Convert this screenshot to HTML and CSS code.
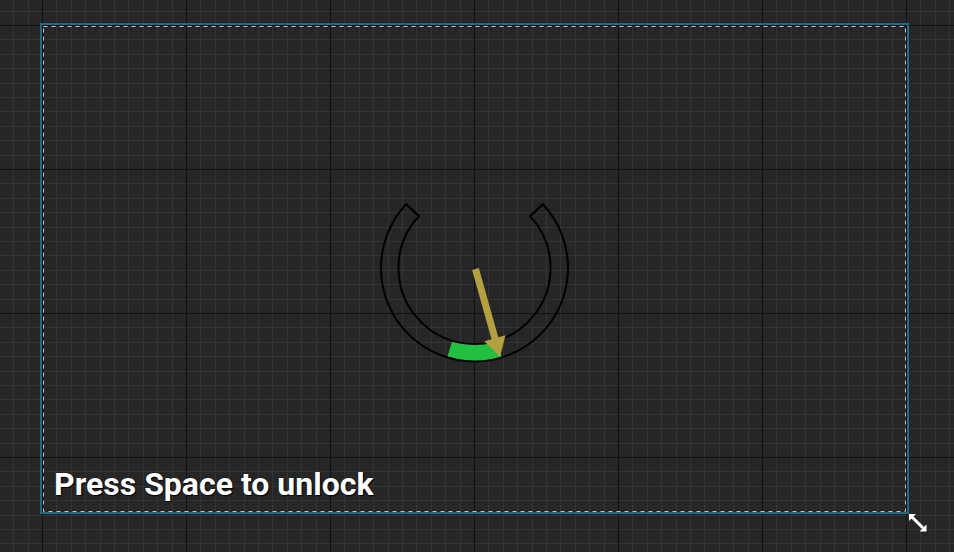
FILE: index.html
```html
<!DOCTYPE html>
<html lang="en">
<head>
<meta charset="utf-8">
<title>Widget Designer</title>
<link rel="stylesheet" href="styles.css">
</head>
<body>
<main class="viewport">
  <svg class="grid" width="954" height="552" aria-hidden="true">
    <defs>
      <pattern id="cell" x="42" y="25" width="144" height="144" patternUnits="userSpaceOnUse">
        <g class="minor">
          <rect x="14" y="0" width="1" height="144"/><rect x="29" y="0" width="1" height="144"/>
          <rect x="43" y="0" width="1" height="144"/><rect x="58" y="0" width="1" height="144"/>
          <rect x="72" y="0" width="1" height="144"/><rect x="86" y="0" width="1" height="144"/>
          <rect x="101" y="0" width="1" height="144"/><rect x="115" y="0" width="1" height="144"/>
          <rect x="130" y="0" width="1" height="144"/>
          <rect y="14" x="0" height="1" width="144"/><rect y="29" x="0" height="1" width="144"/>
          <rect y="43" x="0" height="1" width="144"/><rect y="58" x="0" height="1" width="144"/>
          <rect y="72" x="0" height="1" width="144"/><rect y="86" x="0" height="1" width="144"/>
          <rect y="101" x="0" height="1" width="144"/><rect y="115" x="0" height="1" width="144"/>
          <rect y="130" x="0" height="1" width="144"/>
        </g>
        <g class="major">
          <rect x="0" y="0" width="1" height="144"/>
          <rect x="0" y="0" width="144" height="1"/>
        </g>
      </pattern>
    </defs>
    <rect width="954" height="552" fill="url(#cell)"/>
  </svg>

  <section class="frame">
    <div class="canvas">
      <svg class="safe" width="865" height="487" aria-hidden="true">
        <rect x="1.5" y="1.5" width="862" height="485"/>
      </svg>

      <svg class="gauge" width="201" height="201" viewBox="0 0 201 201" aria-hidden="true">
        <path class="zone" d="M78.28 172.68 L73.16 189.41 A93.5 93.5 0 0 0 127.84 189.41 L122.72 172.68 A76 76 0 0 1 78.28 172.68 Z"/>
        <path class="ring" d="M32.11 36.23 A93.5 93.5 0 1 0 168.89 36.23 L156.09 48.17 A76 76 0 1 1 44.91 48.17 Z"/>
        <polygon class="needle" points="98.13,101.94 104.87,100.06 124.27,169.36 131.5,167.3 126,188.7 110.3,173.3 117.53,171.24"/>
      </svg>

      <p class="prompt">Press Space to unlock</p>
    </div>

    <svg class="resize" width="20" height="20" viewBox="0 0 20 20" aria-hidden="true">
      <line x1="4" y1="4" x2="15" y2="15"/>
      <polygon points="1,1 8,1 1,8"/>
      <polygon points="18.5,18.5 11.5,18.5 18.5,11.5"/>
    </svg>
  </section>
</main>
</body>
</html>
```
FILE: styles.css
```css
html, body {
  margin: 0;
  padding: 0;
}

body {
  width: 954px;
  height: 552px;
  overflow: hidden;
  background: #262626;
  font-family: Roboto, "Liberation Sans", sans-serif;
}

.viewport {
  position: relative;
  width: 954px;
  height: 552px;
}

.grid {
  position: absolute;
  left: 0;
  top: 0;
  display: block;
}

.grid .minor rect {
  fill: #333333;
}

.grid .major rect {
  fill: #121212;
}

.frame {
  position: absolute;
  left: 40px;
  top: 23px;
  border: 2px solid #1e6985;
}

.canvas {
  position: relative;
  width: 865px;
  height: 487px;
  display: grid;
  grid-template-columns: 1fr;
  grid-template-rows: 1fr;
}

.safe {
  position: absolute;
  left: 0;
  top: 0;
  display: block;
}

.safe rect {
  fill: none;
  stroke: #c4c4c4;
  stroke-width: 1;
  stroke-dasharray: 4 4;
}

.gauge {
  grid-area: 1 / 1;
  place-self: center;
  display: block;
}

.zone {
  fill: #23bf41;
}

.ring {
  fill: none;
  stroke: #000000;
  stroke-width: 2;
  stroke-linejoin: miter;
}

.needle {
  fill: #b3a041;
}

.prompt {
  grid-area: 1 / 1;
  justify-self: start;
  align-self: end;
  margin: 0 0 9px 12px;
  font-size: 32px;
  line-height: 38px;
  font-weight: 700;
  color: #ffffff;
  text-shadow: 1px 1px 1px #000000, 0 0 1px #000000;
}

.resize {
  position: absolute;
  left: calc(100% + 1px);
  top: calc(100% + 1px);
  display: block;
}

.resize line {
  stroke: #ffffff;
  stroke-width: 3;
}

.resize polygon {
  fill: #ffffff;
}
```
